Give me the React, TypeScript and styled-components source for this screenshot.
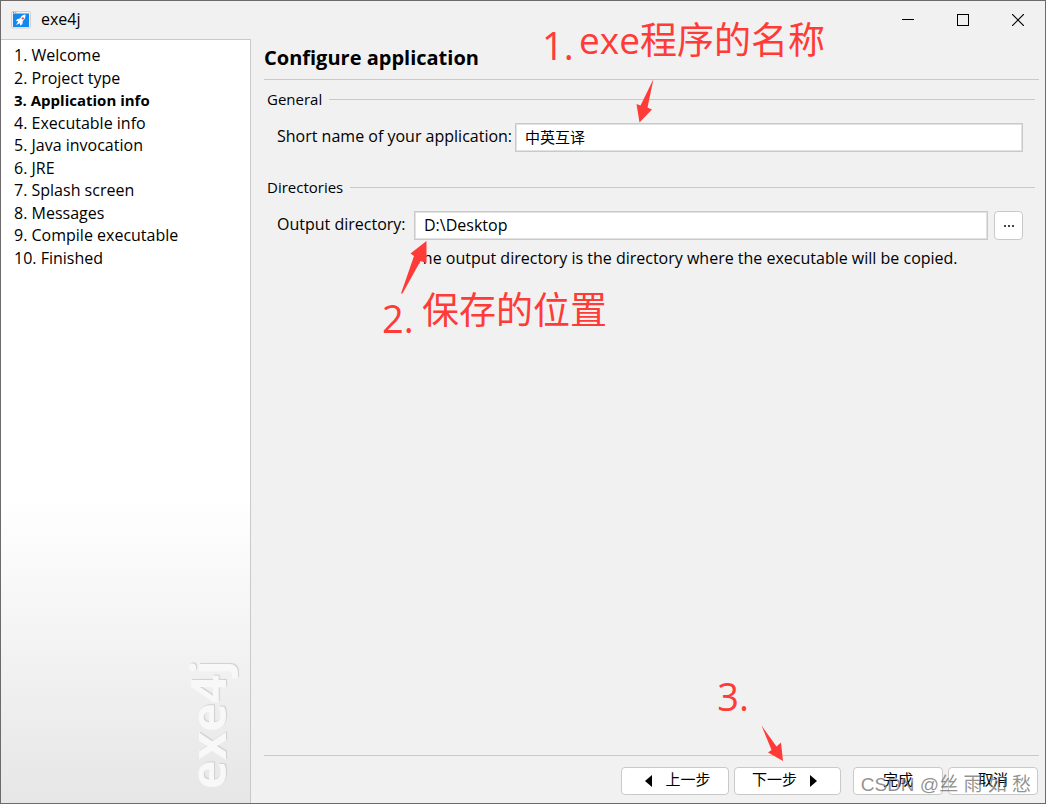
import React from "react";
import styled, { createGlobalStyle } from "styled-components";

const uiFont = `"Open Sans", "Noto Sans CJK SC", sans-serif`;
const line = "#c9c9c9";
const markRed = "#ff3b38";

const GlobalStyle = createGlobalStyle`
  *, *::before, *::after { box-sizing: border-box; }
  body { margin: 0; background: #f1f1f1; }
  body, button { font-family: ${uiFont}; font-size: 16px; color: #000; }
  h1, h2, p, ol { margin: 0; padding: 0; }
`;

const Window = styled.div`
  position: relative;
  display: flex;
  flex-direction: column;
  min-height: 100vh;
  border: 1px solid #6e6a6c;
  background: #f1f1f1;
`;

const TitleBar = styled.header`
  display: flex;
  align-items: center;
  height: 38px;
  padding-left: 10px;
`;

const TitleText = styled.span`
  flex: 1;
  margin-left: 10px;
  padding-bottom: 2px;
  line-height: 20px;
`;

const CaptionButton = styled.button`
  display: grid;
  place-items: center;
  width: 55px;
  height: 38px;
  padding: 0;
  border: 0;
  background: transparent;
`;

const Body = styled.div`
  display: flex;
  flex: 1;
`;

const Sidebar = styled.nav`
  display: flex;
  flex-direction: column;
  justify-content: space-between;
  width: 250px;
  flex-shrink: 0;
  padding: 4px 18px 14px 13px;
  border-top: 1px solid ${line};
  border-right: 1px solid ${line};
  background: linear-gradient(#fff 60%, #e6e6e6);
`;

const Steps = styled.ol`
  display: grid;
  grid-auto-rows: 1fr;
  height: 225px;
  list-style: none;
`;

const Step = styled.li<{ $current?: boolean }>`
  line-height: 22px;
  font-size: ${(p) => (p.$current ? 15 : 16)}px;
  font-weight: ${(p) => (p.$current ? 700 : 400)};
`;

const Brand = styled.div`
  align-self: flex-end;
  writing-mode: vertical-rl;
  transform: rotate(180deg);
  font-size: 49px;
  line-height: 50px;
  font-weight: 700;
  color: #f8f8f8;
  text-shadow: 1px 1px 1px #cfcfcf;
`;

const Main = styled.main`
  display: flex;
  flex-direction: column;
  flex: 1;
  min-width: 0;
  padding: 0 6px 0 13px;
`;

const Heading = styled.h1`
  height: 41px;
  border-bottom: 1px solid ${line};
  font-size: 20px;
  line-height: 37px;
  font-weight: 700;
`;

const Group = styled.section`
  padding: 0 4px 0 3px;
  & + & { margin-top: 16px; }
`;

const GroupTitle = styled.h2`
  display: flex;
  align-items: center;
  gap: 7px;
  margin-bottom: 4px;
  font-size: 15px;
  line-height: 39px;
  font-weight: 400;
  &::after {
    content: "";
    flex: 1;
    height: 1px;
    background: ${line};
  }
`;

const FieldGrid = styled.div<{ $columns: string }>`
  display: grid;
  grid-template-columns: ${(p) => p.$columns};
  align-items: center;
  padding: 0 12px 0 10px;
`;

const FieldLabel = styled.label`
  padding-bottom: 2px;
  line-height: 27px;
  white-space: nowrap;
`;

const TextBox = styled.input<{ $size: number }>`
  width: 100%;
  min-width: 0;
  height: 29px;
  padding: 0 8px 2px 9px;
  border: 1px solid ${line};
  outline: 0;
  background: #fff;
  box-shadow: inset 0 0 0 1px #e2e2e2;
  font-family: ${uiFont};
  font-size: ${(p) => p.$size}px;
  color: #000;
`;

const PushButton = styled.button<{ $width: number; $pad?: string }>`
  display: flex;
  align-items: center;
  justify-content: center;
  gap: 13px;
  width: ${(p) => p.$width}px;
  height: 28px;
  padding: ${(p) => p.$pad ?? "0"};
  border: 1px solid ${line};
  border-radius: 4px;
  background: #fff;
  font-size: 15px;
  line-height: 20px;
`;

const ButtonText = styled.span`
  padding-bottom: 4px;
`;

const BrowseButton = styled(PushButton)`
  height: 29px;
  margin-left: 6px;
`;

const Hint = styled.p`
  grid-column: 2 / -1;
  margin-top: 7px;
  line-height: 22px;
`;

const Footer = styled.footer`
  display: flex;
  justify-content: flex-end;
  gap: 12px;
  margin-top: auto;
  padding: 11px 1px 8px;
  border-top: 1px solid ${line};
`;

const ButtonPair = styled.div`
  display: flex;
  gap: 5px;
`;

const Note = styled.span<{ $x: number; $y: number; $size: number }>`
  position: absolute;
  left: ${(p) => p.$x}px;
  top: ${(p) => p.$y}px;
  font-size: ${(p) => p.$size}px;
  line-height: 48px;
  white-space: nowrap;
  color: ${markRed};
  pointer-events: none;
`;

const BottomNote = styled(Note)`
  top: auto;
  bottom: ${(p) => p.$y}px;
  left: auto;
  right: ${(p) => p.$x}px;
`;

const Arrow = styled.svg<{ $x: number; $y: number }>`
  position: absolute;
  left: ${(p) => p.$x}px;
  top: ${(p) => p.$y}px;
  fill: ${markRed};
  pointer-events: none;
`;

const BottomArrow = styled(Arrow)`
  top: auto;
  bottom: ${(p) => p.$y}px;
  left: auto;
  right: ${(p) => p.$x}px;
`;

const Watermark = styled.span`
  position: absolute;
  right: 14px;
  bottom: 6px;
  font-family: "Liberation Sans", "Noto Sans CJK SC", sans-serif;
  font-size: 19px;
  line-height: 24px;
  white-space: nowrap;
  color: rgba(110, 110, 110, 0.75);
  pointer-events: none;
`;

const steps = [
  "Welcome",
  "Project type",
  "Application info",
  "Executable info",
  "Java invocation",
  "JRE",
  "Splash screen",
  "Messages",
  "Compile executable",
  "Finished",
];

const AppIcon = () => (
  <svg width="20" height="18" viewBox="0 0 20 18" aria-hidden="true">
    <rect x="0.5" y="0.5" width="19" height="16.5" rx="1" fill="#f2f2f2" stroke="#cfcfcf" />
    <circle cx="2.5" cy="1.5" r="0.7" fill="#f0553c" />
    <circle cx="4.7" cy="1.5" r="0.7" fill="#f0a03c" />
    <rect x="2" y="2.5" width="16" height="13.5" fill="#1287ee" />
    <path d="M14.5 3.500c-2.600.2-4.200 1.500-5.400 3.900l-2.700.6-1.700 2.200 2.500-.1-.6 1.300-1.500 2.600 2.700-1.200 1.200-.6.200 2.600 2.300-1.900.2-2.600c2.100-1.800 2.900-4 2.800-6.800z" fill="#fff" />
    <circle cx="11.800" cy="7.400" r="1.200" fill="#e8574a" />
  </svg>
);

export default function App() {
  return (
    <>
      <GlobalStyle />
      <Window>
        <TitleBar>
          <AppIcon />
          <TitleText>exe4j</TitleText>
          <CaptionButton aria-label="Minimize">
            <svg width="12" height="12" shapeRendering="crispEdges">
              <path d="M0 5.500h12" stroke="#000" />
            </svg>
          </CaptionButton>
          <CaptionButton aria-label="Maximize">
            <svg width="12" height="12" shapeRendering="crispEdges">
              <rect x="0.500" y="0.500" width="11" height="11" fill="none" stroke="#000" />
            </svg>
          </CaptionButton>
          <CaptionButton aria-label="Close">
            <svg width="12" height="12">
              <path d="M0 0l12 12M12 0L0 12" stroke="#000" strokeWidth="1.200" />
            </svg>
          </CaptionButton>
        </TitleBar>

        <Body>
          <Sidebar>
            <Steps>
              {steps.map((name, i) => (
                <Step key={name} $current={i === 2} aria-current={i === 2 ? "step" : undefined}>
                  {`${i + 1}. ${name}`}
                </Step>
              ))}
            </Steps>
            <Brand>exe4j</Brand>
          </Sidebar>

          <Main>
            <Heading>Configure application</Heading>
            <Group>
              <GroupTitle>General</GroupTitle>
              <FieldGrid $columns="238px 1fr">
                <FieldLabel htmlFor="short-name">Short name of your application:</FieldLabel>
                <TextBox id="short-name" $size={15} defaultValue="中英互译" />
              </FieldGrid>
            </Group>
            <Group>
              <GroupTitle>Directories</GroupTitle>
              <FieldGrid $columns="137px 1fr auto">
                <FieldLabel htmlFor="output-dir">Output directory:</FieldLabel>
                <TextBox id="output-dir" $size={16} defaultValue="D:\Desktop" />
                <BrowseButton $width={29} aria-label="Browse">
                  <svg width="10" height="2" shapeRendering="crispEdges">
                    <path d="M0 0h2v2h-2zM4 0h2v2h-2zM8 0h2v2h-2z" fill="#444" />
                  </svg>
                </BrowseButton>
                <Hint>The output directory is the directory where the executable will be copied.</Hint>
              </FieldGrid>
            </Group>
            <Footer>
              <ButtonPair>
                <PushButton $width={108} $pad="0 0 0 6px">
                  <svg width="7" height="12" aria-hidden="true">
                    <path d="M7 0v12L0 6z" />
                  </svg>
                  <ButtonText>上一步</ButtonText>
                </PushButton>
                <PushButton $width={107} $pad="0 6px 0 0">
                  <ButtonText>下一步</ButtonText>
                  <svg width="7" height="12" aria-hidden="true">
                    <path d="M0 0v12l7-6z" />
                  </svg>
                </PushButton>
              </ButtonPair>
              <ButtonPair>
                <PushButton $width={90}>
                  <ButtonText>完成</ButtonText>
                </PushButton>
                <PushButton $width={90}>
                  <ButtonText>取消</ButtonText>
                </PushButton>
              </ButtonPair>
            </Footer>
          </Main>
        </Body>

        <Note $x={541} $y={20} $size={38}>1.</Note>
        <Note $x={578} $y={15} $size={37}>exe程序的名称</Note>
        <Arrow $x={634} $y={78} width="20" height="44">
          <path d="M18.500 0L12.500 28.500l4.500 2L4.500 43.500L1.500 25l4 1.500z" />
        </Arrow>
        <Arrow $x={399} $y={239} width="30" height="56">
          <path d="M26.500 1v22l-6-2L2.500 53.500L1 53.500L14 16l-3.500-2.500z" />
        </Arrow>
        <Note $x={381} $y={293} $size={38}>2.</Note>
        <Note $x={421} $y={285} $size={37}>保存的位置</Note>
        <BottomNote $x={296} $y={83} $size={38}>3.</BottomNote>
        <BottomArrow $x={260} $y={41} width="24" height="38">
          <path d="M0.500 1.500L15.500 22.500l4.500-4L22 37L7 28.500l3.500-2.500z" />
        </BottomArrow>
        <Watermark>CSDN @丝 雨 如 愁</Watermark>
      </Window>
    </>
  );
}
